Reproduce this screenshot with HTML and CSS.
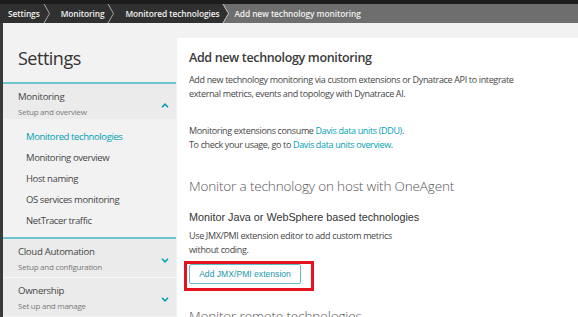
FILE: index.html
```html
<!DOCTYPE html>
<html lang="en">
<head>
  <meta charset="utf-8" />
  <title>Add new technology monitoring – Settings</title>
  <link rel="stylesheet" href="styles.css">
</head>
<body>
  <div class="topbar"></div>

  <!-- breadcrumb trail -->
  <nav class="crumbs">
    <a class="crumb first">Settings</a>
    <svg class="sep" viewBox="0 0 7 19"><path d="M0 0H1L6.5 9.5L1 19H0Z" fill="#303030"/><path d="M1 0L6.5 9.5L1 19" fill="none" stroke="#a8a8a8" stroke-width="1"/></svg>
    <a class="crumb">Monitoring</a>
    <svg class="sep" viewBox="0 0 7 19"><path d="M0 0H1L6.5 9.5L1 19H0Z" fill="#303030"/><path d="M1 0L6.5 9.5L1 19" fill="none" stroke="#a8a8a8" stroke-width="1"/></svg>
    <a class="crumb">Monitored technologies</a>
    <svg class="sep last-sep" viewBox="0 0 7 19"><path d="M0 0H1L6.5 9.5L1 19H0Z" fill="#303030"/><path d="M1 0L6.5 9.5L1 19" fill="none" stroke="#c8c8c8" stroke-width="1"/></svg>
    <span class="crumb current">Add new technology monitoring</span>
  </nav>

  <div class="page">
    <div class="rail"></div>

    <!-- settings menu -->
    <aside class="side">
      <h2 class="side-title">Settings</h2>

      <div class="group open">
        <div class="group-head">
          <div>
            <div class="group-name">Monitoring</div>
            <div class="group-sub">Setup and overview</div>
          </div>
          <svg class="chev" viewBox="0 0 8 5"><path d="M1 4.2L4 1.2L7 4.2" fill="none" stroke="#00a1b2" stroke-width="1.6"/></svg>
        </div>
        <ul class="group-items">
          <li class="active">Monitored technologies</li>
          <li>Monitoring overview</li>
          <li>Host naming</li>
          <li>OS services monitoring</li>
          <li>NetTracer traffic</li>
        </ul>
      </div>

      <div class="group">
        <div class="group-head">
          <div>
            <div class="group-name">Cloud Automation</div>
            <div class="group-sub">Setup and configuration</div>
          </div>
          <svg class="chev" viewBox="0 0 8 5"><path d="M1 0.8L4 3.8L7 0.8" fill="none" stroke="#00a1b2" stroke-width="1.6"/></svg>
        </div>
      </div>

      <div class="group plain">
        <div class="group-head">
          <div>
            <div class="group-name">Ownership</div>
            <div class="group-sub">Set up and manage</div>
          </div>
          <svg class="chev" viewBox="0 0 8 5"><path d="M1 0.8L4 3.8L7 0.8" fill="none" stroke="#00a1b2" stroke-width="1.6"/></svg>
        </div>
      </div>
    </aside>

    <main class="main">
      <section class="card">
        <h1>Add new technology monitoring</h1>
        <p>Add new technology monitoring via custom extensions or Dynatrace API to integrate<br>external metrics, events and topology with Dynatrace AI.</p>
        <p class="ddu">Monitoring extensions consume <a>Davis data units (DDU)</a>.<br>To check your usage, go to <a>Davis data units overview</a>.</p>

        <h2>Monitor a technology on host with OneAgent</h2>
        <h3>Monitor Java or WebSphere based technologies</h3>
        <p class="tight">Use JMX/PMI extension editor to add custom metrics<br>without coding.</p>
        <div class="btn-wrap">
          <button class="btn">Add JMX/PMI extension</button>
          <span class="mark"></span>
        </div>

        <h2 class="next">Monitor remote technologies</h2>
      </section>
    </main>
  </div>
</body>
</html>
```

FILE: styles.css
```css
*,*::before,*::after{box-sizing:border-box;margin:0;padding:0;}

:root{
  --teal:#00a1b2;
  --teal-line:#6cc4cc;
  --ink:#454646;
  --muted:#7a7a7a;
  --bg:#f2f2f2;
}

html,body{height:100%;overflow:hidden;}
body{
  font-family:"Open Sans",sans-serif;
  color:var(--ink);
  background:var(--bg);
  display:flex;
  flex-direction:column;
}

/* === top chrome === */
.topbar{height:4px;background:#1c1c1c;}

.crumbs{
  height:19px;
  display:flex;
  align-items:stretch;
  background:#303030;
  font-size:8.4px;
  font-weight:600;
  letter-spacing:-.1px;
  color:#f0f0f0;
  white-space:nowrap;
}
.crumb{display:flex;align-items:center;padding:0 3px 0 11px;}
.crumb.first{padding-left:8px;}
.crumb.current{flex:1;background:#6e6e6e;padding-left:5px;}
.sep{width:7px;height:19px;flex:none;}
.last-sep{background:#6e6e6e;}

/* === page body === */
.page{flex:1;display:flex;min-height:0;}
.rail{width:3px;background:#3a3a3a;flex:none;}

.side{width:173px;flex:none;background:var(--bg);}
.side-title{
  font-size:18px;
  font-weight:500;
  line-height:24px;
  letter-spacing:-.5px;
  color:#333;
  padding:23px 0 0 15px;
  margin-bottom:12px;
}

.group{border-top:2px solid var(--teal-line);}
.group.plain{border-top:1px solid #f8f8f8;}
.group-head{
  display:flex;
  justify-content:space-between;
  align-items:center;
  background:#ebebeb;
  padding:7px 7px 5px 15px;
}
.group.open .group-head{padding-bottom:2px;}
.group-name{font-size:9.6px;line-height:12px;letter-spacing:-.3px;color:var(--ink);}
.group-sub{font-size:8px;line-height:11px;margin-top:3px;color:var(--muted);letter-spacing:-.25px;}
.chev{width:8px;height:5px;margin-top:2px;}

.group-items{list-style:none;padding:7px 0 6px 23px;}
.group-items li{font-size:9.5px;line-height:21px;letter-spacing:-.4px;color:var(--ink);}
.group-items li.active{color:var(--teal);}

/* === content card === */
.main{flex:1;padding:15px 0 0 1px;min-width:0;}
.card{
  background:#fff;
  height:100%;
  padding:12px 0 0 12px;
  white-space:nowrap;
}
.card h1{
  font-size:12.5px;
  font-weight:600;
  line-height:16px;
  letter-spacing:-.35px;
  color:#3a3a3a;
  margin-bottom:6.5px;
}
.card p{font-size:9px;line-height:14px;letter-spacing:-.35px;}
.card p a{color:var(--teal);}
.card .ddu{margin-top:23px;}
.card h2{
  font-size:13.5px;
  font-weight:300;
  line-height:18px;
  letter-spacing:-.15px;
  color:#555;
  margin-top:25px;
}
.card h3{
  font-family:"Liberation Sans",Arial,sans-serif;
  font-size:10.8px;
  font-weight:400;
  line-height:14px;
  color:#333;
  margin-top:15.5px;
}
.card .tight{margin-top:5px;}

.btn-wrap{position:relative;display:inline-block;margin-top:7px;}
.btn{
  display:block;
  height:20px;
  width:112px;
  background:#fff;
  border:1px solid #5fbfc8;
  border-radius:2px;
  font-family:"Liberation Sans",Arial,sans-serif;
  font-size:8.6px;
  color:#1b97a7;
}
/* red annotation frame drawn over the button */
.mark{
  position:absolute;
  left:-5px;
  top:-3px;
  width:130px;
  height:30px;
  border:3px solid #e3141f;
  pointer-events:none;
}
.card h2.next{margin-top:23px;}
```
